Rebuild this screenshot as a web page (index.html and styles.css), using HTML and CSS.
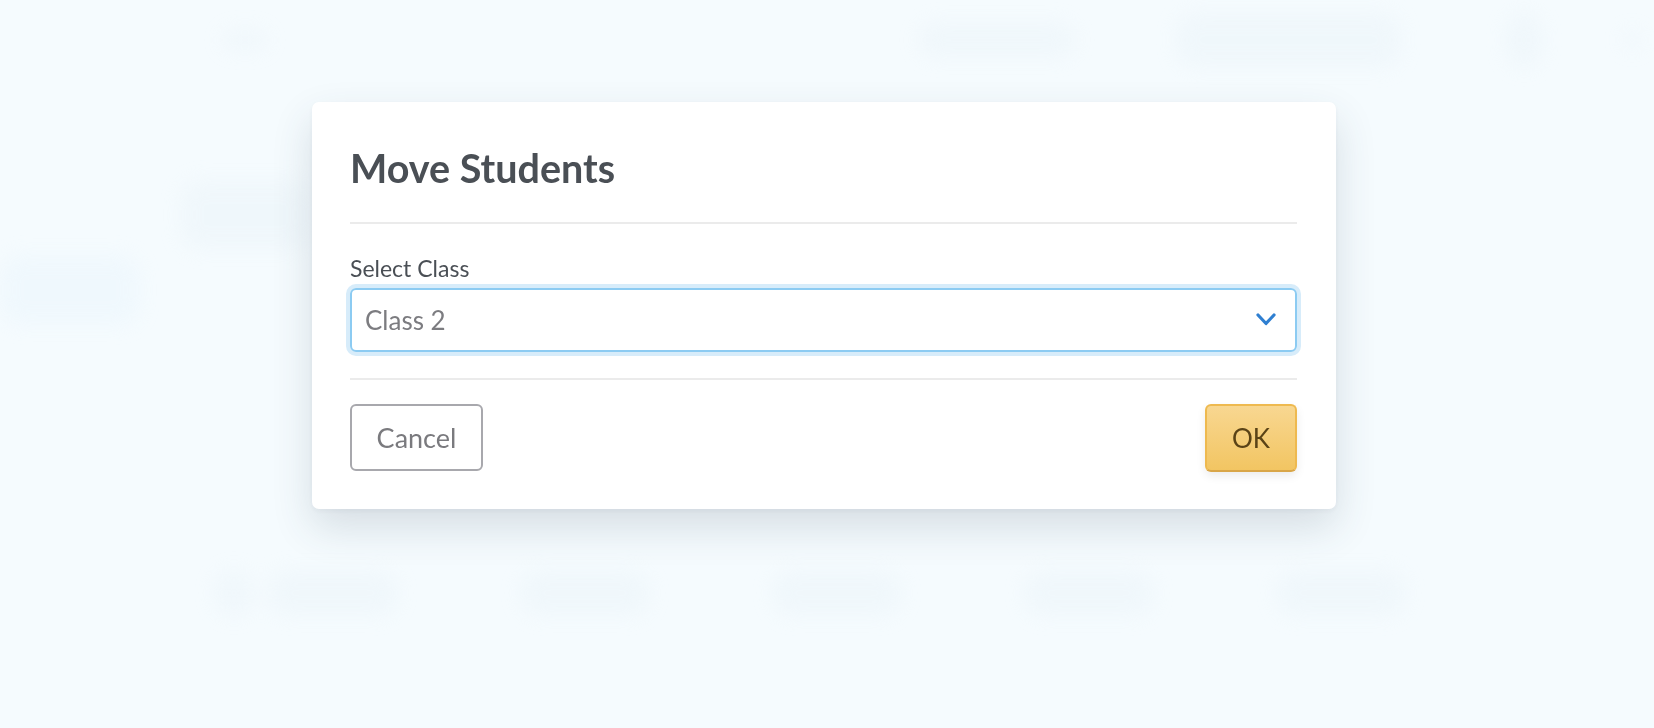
FILE: index.html
```html
<!DOCTYPE html>
<html lang="en">
<head>
<meta charset="utf-8">
<title>Move Students</title>
<link rel="stylesheet" href="styles.css">
</head>
<body>
<div class="backdrop" aria-hidden="true">
  <div class="bd-top">
    <span class="blob b-dot"></span>
    <span class="bd-spacer"></span>
    <span class="blob b-pill1"></span>
    <span class="blob b-pill2"></span>
    <span class="blob b-pill3"></span>
    <span class="blob b-dot2"></span>
  </div>
  <div class="bd-mid">
    <div class="bd-left">
      <span class="blob b-side1"></span>
      <span class="blob b-side2"></span>
    </div>
  </div>
  <div class="bd-row">
    <span class="blob b-sm"></span>
    <span class="blob b-cell"></span>
    <span class="blob b-cell"></span>
    <span class="blob b-cell"></span>
    <span class="blob b-cell"></span>
    <span class="blob b-cell"></span>
  </div>
</div>

<div class="overlay">
  <div class="modal" role="dialog" aria-labelledby="modal-title">
    <h1 class="modal-title" id="modal-title">Move Students</h1>
    <hr class="divider divider-top">
    <label class="field-label" for="class-select">Select Class</label>
    <div class="select">
      <span class="select-value">Class 2</span>
      <svg class="chevron" width="20" height="13" viewBox="0 0 20 13"><path d="M2 2 L10 10.5 L18 2" fill="none" stroke="#2f7fd1" stroke-width="3.2" stroke-linecap="round" stroke-linejoin="round"/></svg>
    </div>
    <hr class="divider divider-bottom">
    <div class="actions">
      <button class="btn btn-cancel" type="button">Cancel</button>
      <button class="btn btn-ok" type="button">OK</button>
    </div>
  </div>
</div>
</body>
</html>
```

FILE: styles.css
```css
* { box-sizing: border-box; }

html, body {
  margin: 0;
  padding: 0;
}

body {
  width: 1654px;
  height: 728px;
  overflow: hidden;
  background: #f5fbfe;
  font-family: "Lato", "Noto Sans", sans-serif;
}

/* blurred page behind the dialog */
.backdrop {
  filter: blur(10px);
  opacity: 0.28;
}

.blob {
  display: block;
  background: #e3eef5;
  border-radius: 20px;
}

.bd-top {
  display: flex;
  align-items: center;
  height: 80px;
  padding-left: 222px;
}
.b-dot { width: 46px; height: 20px; }
.bd-spacer { width: 650px; }
.b-pill1 { width: 158px; height: 36px; }
.b-pill2 { width: 225px; height: 56px; margin-left: 100px; }
.b-pill3 { width: 36px; height: 56px; margin-left: 105px; }
.b-dot2 { width: 20px; height: 18px; margin-left: 80px; }

.bd-mid {
  height: 490px;
}
.bd-left {
  display: flex;
  flex-direction: column;
  padding-top: 100px;
}
.b-side1 { width: 130px; height: 70px; margin-left: 180px; }
.b-side2 { width: 140px; height: 70px; margin-top: 5px; background: #e2f1fb; }

.bd-row {
  display: flex;
  padding-left: 214px;
  align-items: center;
}
.b-sm { width: 40px; height: 46px; }
.b-cell { width: 130px; height: 46px; margin-left: 14px; }
.b-cell + .b-cell { margin-left: 122px; }

/* dialog */
.overlay {
  position: fixed;
  inset: 0;
  padding: 102px 0 0 312px;
}

.modal {
  width: 1024px;
  background: #ffffff;
  border-radius: 7px;
  padding: 42px 39px 37px 38px;
  box-shadow: 0 18px 40px rgba(50, 70, 90, 0.16), 0 2px 6px rgba(50, 70, 90, 0.05);
}

.modal-title {
  margin: 0;
  font-size: 39.5px;
  line-height: 1.2;
  font-weight: 700;
  color: #4a4f55;
}

.divider {
  border: 0;
  height: 2px;
  background: #ebebeb;
  margin: 0;
}
.divider-top { margin-top: 31px; }
.divider-bottom { margin-top: 26px; }

.field-label {
  display: block;
  margin-top: 31px;
  font-size: 23px;
  line-height: 1.2;
  color: #4a4f55;
}

.select {
  margin-top: 5px;
  height: 64px;
  border: 2px solid #8ccbf2;
  border-radius: 6px;
  box-shadow: 0 0 0 4px #d7ecfa;
  display: flex;
  align-items: center;
  justify-content: space-between;
  padding: 0 19px 0 13px;
}

.select-value {
  font-size: 26px;
  color: #7c7c80;
}

.chevron { display: block; }

.actions {
  margin-top: 24px;
  display: flex;
  justify-content: space-between;
  align-items: flex-start;
}

.btn {
  font-family: inherit;
  border-radius: 6px;
  cursor: pointer;
  padding: 0;
}

.btn-cancel {
  width: 133px;
  height: 67px;
  font-size: 27px;
  background: #ffffff;
  border: 2px solid #a8a8ad;
  color: #7a7a7e;
}

.btn-ok {
  width: 92px;
  height: 68px;
  font-size: 26px;
  background: linear-gradient(#f8d791, #f2c562);
  border: 2px solid #eeb94f;
  border-bottom-color: #d9a648;
  color: #5a4316;
  box-shadow: 0 4px 10px rgba(0, 0, 0, 0.08);
}
```
